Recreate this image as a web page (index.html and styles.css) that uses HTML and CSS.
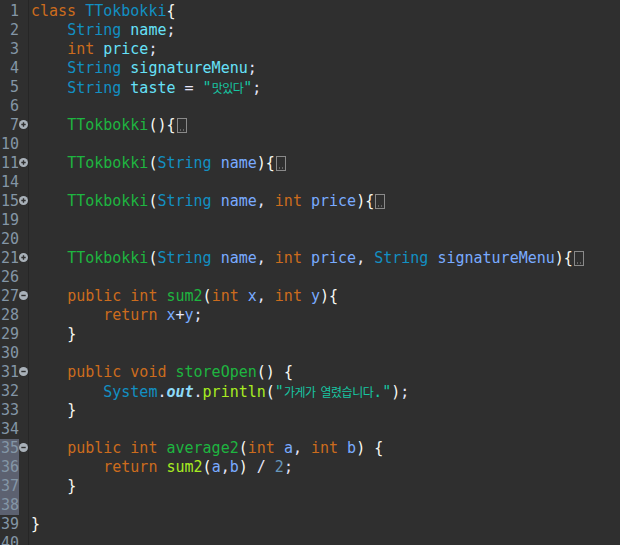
FILE: index.html
```html
<!DOCTYPE html>
<html>
<head>
<meta charset="utf-8">
<link rel="stylesheet" href="styles.css">
</head>
<body>
<div class="editor">
  <div class="row"><span class="ln">1</span><span class="fold"></span><span class="code"><span class="kw">class</span> <span class="ty">TTokbokki</span><span class="br">{</span></span></div>
  <div class="row"><span class="ln">2</span><span class="fold"></span><span class="code">    <span class="ty">String</span> <span class="fd">name</span><span class="op">;</span></span></div>
  <div class="row"><span class="ln">3</span><span class="fold"></span><span class="code">    <span class="kw">int</span> <span class="fd">price</span><span class="op">;</span></span></div>
  <div class="row"><span class="ln">4</span><span class="fold"></span><span class="code">    <span class="ty">String</span> <span class="fd">signatureMenu</span><span class="op">;</span></span></div>
  <div class="row"><span class="ln">5</span><span class="fold"></span><span class="code">    <span class="ty">String</span> <span class="fd">taste</span> <span class="op">=</span> <span class="str">"<span class="ko">맛있다</span>"</span><span class="op">;</span></span></div>
  <div class="row"><span class="ln">6</span><span class="fold"></span><span class="code"></span></div>
  <div class="row"><span class="ln">7</span><span class="fold"><svg class="fm" viewBox="0 0 9 9" width="9" height="9"><circle cx="4.5" cy="4.5" r="4.5"/><path d="M2.3 4.5H6.7M4.5 2.3V6.7"/></svg></span><span class="code">    <span class="md">TTokbokki</span><span class="br">(){</span><svg class="cb" viewBox="0 0 10 15" width="10" height="15"><rect x="0.5" y="0.5" width="9" height="14"/><path d="M3 12h1M6 12h1"/></svg></span></div>
  <div class="row"><span class="ln">10</span><span class="fold"></span><span class="code"></span></div>
  <div class="row"><span class="ln">11</span><span class="fold"><svg class="fm" viewBox="0 0 9 9" width="9" height="9"><circle cx="4.5" cy="4.5" r="4.5"/><path d="M2.3 4.5H6.7M4.5 2.3V6.7"/></svg></span><span class="code">    <span class="md">TTokbokki</span><span class="br">(</span><span class="ty">String</span> <span class="pm">name</span><span class="br">){</span><svg class="cb" viewBox="0 0 10 15" width="10" height="15"><rect x="0.5" y="0.5" width="9" height="14"/><path d="M3 12h1M6 12h1"/></svg></span></div>
  <div class="row"><span class="ln">14</span><span class="fold"></span><span class="code"></span></div>
  <div class="row"><span class="ln">15</span><span class="fold"><svg class="fm" viewBox="0 0 9 9" width="9" height="9"><circle cx="4.5" cy="4.5" r="4.5"/><path d="M2.3 4.5H6.7M4.5 2.3V6.7"/></svg></span><span class="code">    <span class="md">TTokbokki</span><span class="br">(</span><span class="ty">String</span> <span class="pm">name</span><span class="op">,</span> <span class="kw">int</span> <span class="pm">price</span><span class="br">){</span><svg class="cb" viewBox="0 0 10 15" width="10" height="15"><rect x="0.5" y="0.5" width="9" height="14"/><path d="M3 12h1M6 12h1"/></svg></span></div>
  <div class="row"><span class="ln">19</span><span class="fold"></span><span class="code"></span></div>
  <div class="row"><span class="ln">20</span><span class="fold"></span><span class="code"></span></div>
  <div class="row"><span class="ln">21</span><span class="fold"><svg class="fm" viewBox="0 0 9 9" width="9" height="9"><circle cx="4.5" cy="4.5" r="4.5"/><path d="M2.3 4.5H6.7M4.5 2.3V6.7"/></svg></span><span class="code">    <span class="md">TTokbokki</span><span class="br">(</span><span class="ty">String</span> <span class="pm">name</span><span class="op">,</span> <span class="kw">int</span> <span class="pm">price</span><span class="op">,</span> <span class="ty">String</span> <span class="pm">signatureMenu</span><span class="br">){</span><svg class="cb" viewBox="0 0 10 15" width="10" height="15"><rect x="0.5" y="0.5" width="9" height="14"/><path d="M3 12h1M6 12h1"/></svg></span></div>
  <div class="row"><span class="ln">26</span><span class="fold"></span><span class="code"></span></div>
  <div class="row"><span class="ln">27</span><span class="fold"><svg class="fm" viewBox="0 0 9 9" width="9" height="9"><circle cx="4.5" cy="4.5" r="4.5"/><path d="M2.3 4.5H6.7"/></svg></span><span class="code">    <span class="kw">public</span> <span class="kw">int</span> <span class="md">sum2</span><span class="br">(</span><span class="kw">int</span> <span class="pm">x</span><span class="op">,</span> <span class="kw">int</span> <span class="pm">y</span><span class="br">){</span></span></div>
  <div class="row"><span class="ln">28</span><span class="fold"></span><span class="code">        <span class="kw">return</span> <span class="pm">x</span><span class="op">+</span><span class="pm">y</span><span class="op">;</span></span></div>
  <div class="row"><span class="ln">29</span><span class="fold"></span><span class="code">    <span class="br">}</span></span></div>
  <div class="row"><span class="ln">30</span><span class="fold"></span><span class="code"></span></div>
  <div class="row"><span class="ln">31</span><span class="fold"><svg class="fm" viewBox="0 0 9 9" width="9" height="9"><circle cx="4.5" cy="4.5" r="4.5"/><path d="M2.3 4.5H6.7"/></svg></span><span class="code">    <span class="kw">public</span> <span class="kw">void</span> <span class="md">storeOpen</span><span class="br">()</span> <span class="br">{</span></span></div>
  <div class="row"><span class="ln">32</span><span class="fold"></span><span class="code">        <span class="ty">System</span><span class="op">.</span><span class="sf">out</span><span class="op">.</span><span class="mc">println</span><span class="br">(</span><span class="str">"<span class="ko">가게가</span><span class="sp"> </span><span class="ko">열렸습니다</span>."</span><span class="br">)</span><span class="op">;</span></span></div>
  <div class="row"><span class="ln">33</span><span class="fold"></span><span class="code">    <span class="br">}</span></span></div>
  <div class="row"><span class="ln">34</span><span class="fold"></span><span class="code"></span></div>
  <div class="row"><span class="ln sel">35</span><span class="fold"><svg class="fm" viewBox="0 0 9 9" width="9" height="9"><circle cx="4.5" cy="4.5" r="4.5"/><path d="M2.3 4.5H6.7"/></svg></span><span class="code">    <span class="kw">public</span> <span class="kw">int</span> <span class="md">average2</span><span class="br">(</span><span class="kw">int</span> <span class="pm">a</span><span class="op">,</span> <span class="kw">int</span> <span class="pm">b</span><span class="br">)</span> <span class="br">{</span></span></div>
  <div class="row"><span class="ln sel">36</span><span class="fold"></span><span class="code">        <span class="kw">return</span> <span class="mc">sum2</span><span class="br">(</span><span class="pm">a</span><span class="op">,</span><span class="pm">b</span><span class="br">)</span> <span class="op">/</span> <span class="num">2</span><span class="op">;</span></span></div>
  <div class="row"><span class="ln sel">37</span><span class="fold"></span><span class="code">    <span class="br">}</span></span></div>
  <div class="row"><span class="ln sel">38</span><span class="fold"></span><span class="code"></span></div>
  <div class="row"><span class="ln">39</span><span class="fold"></span><span class="code"><span class="br">}</span></span></div>
  <div class="row"><span class="ln">40</span><span class="fold"></span><span class="code"></span></div>
</div>
</body>
</html>
```

FILE: styles.css
```css
html, body {
  margin: 0;
  padding: 0;
  background: #2f2f2f;
  height: 100%;
  overflow: hidden;
}

.editor {
  padding-top: 2px;
  font-family: "DejaVu Sans Mono", "Liberation Mono", monospace;
  font-size: 15px;
  line-height: 19px;
  color: #d9e8f7;
  min-height: 545px;
  background: linear-gradient(to right, transparent 28px, #262626 28px, #262626 29px, transparent 29px);
}

.row {
  display: flex;
  height: 19px;
}

.ln {
  width: 19px;
  flex: none;
  color: #8496a6;
  text-align: right;
  white-space: nowrap;
  direction: rtl;
}

.ln.sel {
  background: #5c6170;
}

.fold {
  width: 9px;
  flex: none;
  display: flex;
  align-items: center;
  justify-content: center;
  padding-bottom: 3px;
  box-sizing: border-box;
}

.fm circle {
  fill: #a9b1b9;
}

.fm path {
  stroke: #2f2f2f;
  stroke-width: 1.4;
  fill: none;
}

.code {
  padding-left: 3px;
  white-space: pre;
  flex: 1;
}

.cb {
  vertical-align: -3px;
  margin-left: 1px;
}

.cb rect {
  fill: none;
  stroke: #8a8a8a;
}

.cb path {
  stroke: #9a9a9a;
  stroke-width: 1;
}

.kw { color: #cc6c1d; }
.ty { color: #1290c3; }
.fd { color: #66e1f8; }
.md { color: #1eb540; }
.mc { color: #a7ec21; }
.pm { color: #79abff; }
.str { color: #17c6a3; }
.br { color: #f9faf4; }
.op { color: #e6e6fa; }
.num { color: #6897bb; }
.sf { color: #8ddaf8; font-style: italic; font-weight: bold; }

.ko {
  font-family: "Noto Sans CJK KR", sans-serif;
  font-size: 12px;
  letter-spacing: -0.5px;
}

.sp {
  letter-spacing: -4px;
}
```
